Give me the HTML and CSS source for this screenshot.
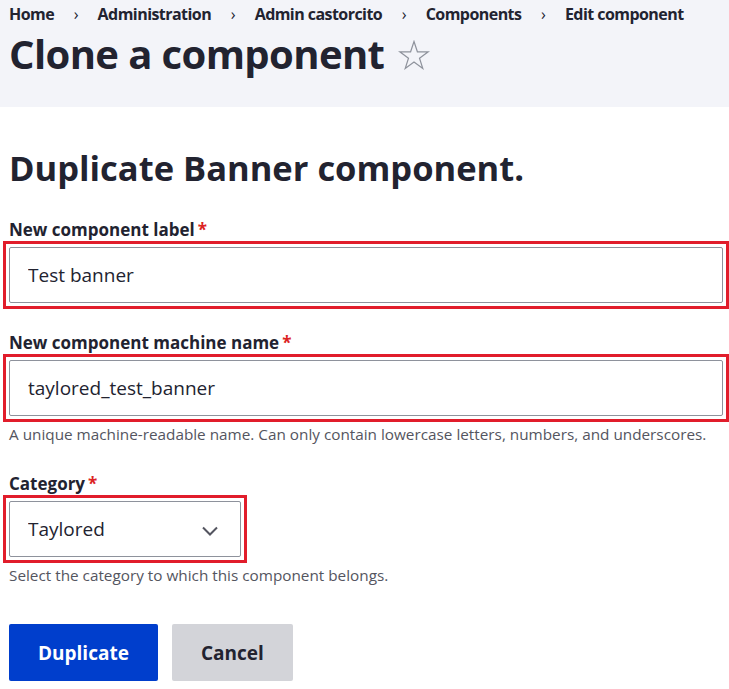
FILE: index.html
```html
<!DOCTYPE html>
<html lang="en">
<head>
    <meta charset="UTF-8">
    <meta name="viewport" content="width=device-width, initial-scale=1.0">
    <title>Clone a component</title>
    <link rel="stylesheet" href="styles.css">
</head>
<body>
    <div class="page-header">
        <nav class="breadcrumb">
            <a href="#">Home</a>
            <span class="sep">›</span>
            <a href="#">Administration</a>
            <span class="sep">›</span>
            <a href="#">Admin castorcito</a>
            <span class="sep">›</span>
            <a href="#">Components</a>
            <span class="sep">›</span>
            <a href="#">Edit component</a>
        </nav>
        <h1 class="page-title">
            Clone a component
            <svg class="star" width="32" height="30" viewBox="0 0 32 30"><path d="M16 1.5l3.4 10.3h10.8l-8.7 6.4 3.3 10.3L16 22.1l-8.8 6.4 3.3-10.3-8.7-6.4h10.8z" fill="none" stroke="#8e929c" stroke-width="1.2" stroke-linejoin="miter"/></svg>
        </h1>
    </div>

    <div class="content">
        <h2>Duplicate Banner component.</h2>

        <div class="form-item">
            <label for="label">New component label<span class="req">*</span></label>
            <div class="highlight">
                <input type="text" id="label" class="form-text" value="Test banner">
            </div>
        </div>

        <div class="form-item">
            <label for="machine">New component machine name<span class="req">*</span></label>
            <div class="highlight">
                <input type="text" id="machine" class="form-text" value="taylored_test_banner">
            </div>
            <div class="description">A unique machine-readable name. Can only contain lowercase letters, numbers, and underscores.</div>
        </div>

        <div class="form-item">
            <label for="category">Category<span class="req">*</span></label>
            <div class="highlight select-wrap">
                <select id="category" class="form-select">
                    <option>Taylored</option>
                </select>
                <svg class="chevron" width="16" height="10" viewBox="0 0 16 10"><path d="M1 1.5l7 7 7-7" fill="none" stroke="#545560" stroke-width="2"/></svg>
            </div>
            <div class="description">Select the category to which this component belongs.</div>
        </div>

        <div class="actions">
            <button class="btn btn-primary">Duplicate</button>
            <button class="btn">Cancel</button>
        </div>
    </div>
</body>
</html>
```

FILE: styles.css
```css
body {
    margin: 0;
    font-family: "Open Sans", "Noto Sans", sans-serif;
    color: #222330;
    background: #fff;
}

.page-header {
    background-color: #f3f4f9;
    padding: 4px 9px 0;
    height: 103px;
}

.breadcrumb {
    font-size: 16px;
    font-weight: bold;
    line-height: 20px;
    letter-spacing: -0.55px;
    white-space: nowrap;
}

.breadcrumb a {
    color: #222330;
    text-decoration: none;
}

.breadcrumb .sep {
    margin: 0 16px;
    font-weight: normal;
}

.page-title {
    display: flex;
    align-items: center;
    gap: 14px;
    margin: 6px 0 0;
    font-size: 40px;
    line-height: 48px;
    font-weight: bold;
    letter-spacing: -0.6px;
}

.star {
    margin-top: 2px;
}

.content {
    padding: 0 9px;
}

h2 {
    margin: 40px 0 30px;
    font-size: 34.5px;
    line-height: 42px;
    font-weight: bold;
}

.form-item {
    margin-bottom: 23px;
}

label {
    display: block;
    font-size: 17px;
    font-weight: bold;
    line-height: 22px;
}

.req {
    color: #dc2323;
    margin-left: 3px;
}

.highlight {
    width: fit-content;
    margin-left: -6px;
    padding: 3px;
    border: 3px solid #e11d2b;
}

.form-text {
    display: block;
    box-sizing: border-box;
    width: 714px;
    height: 56px;
    padding: 0 18px;
    border: 1px solid #8e929c;
    border-radius: 2px;
    font-family: inherit;
    font-size: 19px;
    color: #222330;
}

.select-wrap {
    position: relative;
}

.form-select {
    display: block;
    box-sizing: border-box;
    width: 232px;
    height: 56px;
    padding: 0 18px;
    border: 1px solid #8e929c;
    border-radius: 2px;
    background: #fff;
    appearance: none;
    font-family: inherit;
    font-size: 19px;
    color: #222330;
}

.chevron {
    position: absolute;
    right: 26px;
    top: 28px;
}

.description {
    margin-top: 2px;
    padding-bottom: 6px;
    font-size: 15.3px;
    line-height: 20px;
    color: #545560;
}

.actions {
    margin-top: 33px;
    display: flex;
    gap: 14px;
}

.btn {
    height: 57px;
    padding: 0 29px;
    border: none;
    border-radius: 2px;
    background-color: #d3d4d9;
    color: #222330;
    font-family: inherit;
    font-size: 19px;
    font-weight: bold;
}

.btn-primary {
    background-color: #003ecc;
    color: #fff;
}
```
